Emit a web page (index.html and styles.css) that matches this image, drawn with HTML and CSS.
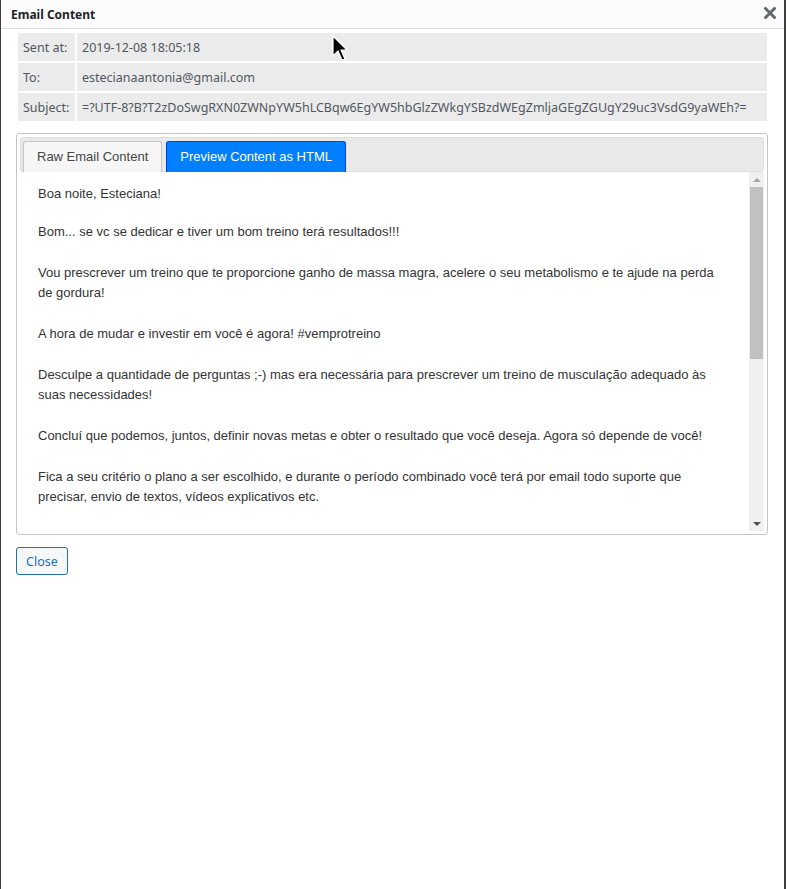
FILE: index.html
```html
<!DOCTYPE html>
<html lang="pt">
<head>
  <meta charset="UTF-8">
  <title>Email Content</title>
  <link rel="stylesheet" href="styles.css">
</head>
<body>
  <div class="modal">
    <div class="modal-header">
      <span class="modal-title">Email Content</span>
      <svg class="modal-close" width="12" height="12" viewBox="0 0 12 12">
        <path d="M1.5 1.5 L10.5 10.5 M10.5 1.5 L1.5 10.5" stroke="#646970" stroke-width="3" stroke-linecap="square"/>
      </svg>
    </div>

    <table class="email-meta">
      <tr>
        <th>Sent at:</th>
        <td>2019-12-08 18:05:18</td>
      </tr>
      <tr>
        <th>To:</th>
        <td>estecianaantonia@gmail.com</td>
      </tr>
      <tr>
        <th>Subject:</th>
        <td>=?UTF-8?B?T2zDoSwgRXN0ZWNpYW5hLCBqw6EgYW5hbGlzZWkgYSBzdWEgZmljaGEgZGUgY29uc3VsdG9yaWEh?=</td>
      </tr>
    </table>

    <div class="tabs">
      <ul class="tabs-nav">
        <li class="tab">Raw Email Content</li>
        <li class="tab active">Preview Content as HTML</li>
      </ul>
      <div class="tab-panel">
        <div class="panel-body">
          <p class="greeting">Boa noite, Esteciana!</p>
          <p>Bom... se vc se dedicar e tiver um bom treino terá resultados!!!</p>
          <p>Vou prescrever um treino que te proporcione ganho de massa magra, acelere o seu metabolismo e te ajude na perda de gordura!</p>
          <p>A hora de mudar e investir em você é agora! #vemprotreino</p>
          <p>Desculpe a quantidade de perguntas ;-) mas era necessária para prescrever um treino de musculação adequado às suas necessidades!</p>
          <p>Concluí que podemos, juntos, definir novas metas e obter o resultado que você deseja. Agora só depende de você!</p>
          <p>Fica a seu critério o plano a ser escolhido, e durante o período combinado você terá por email todo suporte que precisar, envio de textos, vídeos explicativos etc.</p>
          <p>Qualquer dúvida estou à disposição.</p>
          <p>Vamos juntos nessa!</p>
          <p>Abraços,</p>
          <p>Equipe #vemprotreino</p>
        </div>
        <div class="scrollbar">
          <div class="scroll-btn"><span class="arrow-up"></span></div>
          <div class="scroll-track">
            <div class="scroll-thumb"></div>
          </div>
          <div class="scroll-btn"><span class="arrow-down"></span></div>
        </div>
      </div>
    </div>

    <button class="btn-close">Close</button>

    <svg class="cursor" width="16" height="27" viewBox="0 0 16 27">
      <polygon points="1,1 1,21 6,16 10,25 13,24 9,15 15,15" fill="#000" stroke="#fff" stroke-width="1.2"/>
    </svg>
  </div>
</body>
</html>
```

FILE: styles.css
```css
html, body {
  margin: 0;
  padding: 0;
  background: #fff;
}
.modal {
  position: relative;
  box-sizing: border-box;
  width: 786px;
  height: 889px;
  border-left: 1px solid #3f3f3f;
  border-right: 2px solid #3f3f3f;
  background: #fff;
  font-family: "Noto Sans", "Open Sans", sans-serif;
}
.modal-header {
  display: flex;
  align-items: center;
  justify-content: space-between;
  height: 28px;
  padding: 0 8px 0 10px;
  background: #fcfcfc;
  border-bottom: 1px solid #dcdcde;
}
.modal-title {
  font-size: 12px;
  font-weight: bold;
  color: #1d2327;
}
.modal-close {
  margin-top: -2px;
}
.email-meta {
  table-layout: fixed;
  width: calc(100% - 30px);
  margin: 2px 15px 0 15px;
  border-spacing: 2px;
  font-size: 12.5px;
  color: #50575e;
}
.email-meta th, .email-meta td {
  background: #ebebeb;
  height: 28px;
  padding: 0 5px;
  text-align: left;
  font-weight: normal;
  white-space: nowrap;
  overflow: hidden;
}
.email-meta th {
  width: 47px;
}
.tabs {
  margin: 10px 16px 0 15px;
  padding: 3px;
  border: 1px solid #c5c5c5;
  border-radius: 3px;
  font-family: "Liberation Sans", Arial, sans-serif;
}
.tabs-nav {
  display: flex;
  gap: 4px;
  margin: 0;
  padding: 3px 2px 0;
  list-style: none;
  background: #e9e9e9;
  border: 1px solid #dddddd;
  border-radius: 3px;
}
.tab {
  margin-bottom: -1px;
  padding: 7px 13px;
  font-size: 13px;
  line-height: 16px;
  color: #454545;
  background: #f6f6f6;
  border: 1px solid #c5c5c5;
  border-bottom: none;
  border-radius: 3px 3px 0 0;
}
.tab.active {
  color: #fff;
  background: #007fff;
  border-color: #003eff;
}
.tab-panel {
  display: flex;
  height: 359px;
}
.panel-body {
  flex: 1;
  overflow: hidden;
  padding: 12px 24px 0 18px;
  font-size: 13px;
  line-height: 20px;
  color: #333;
}
.panel-body p {
  margin: 0 0 21px;
}
.panel-body .greeting {
  margin-bottom: 18px;
}
.scrollbar {
  display: flex;
  flex-direction: column;
  width: 15px;
  background: #f0f0f0;
}
.scroll-btn {
  display: flex;
  align-items: center;
  justify-content: center;
  height: 15px;
}
.arrow-up, .arrow-down {
  width: 0;
  height: 0;
  border-left: 4px solid transparent;
  border-right: 4px solid transparent;
}
.arrow-up {
  border-bottom: 4px solid #a3a3a3;
}
.arrow-down {
  border-top: 4px solid #505050;
}
.scroll-track {
  flex: 1;
}
.scroll-thumb {
  height: 172px;
  margin: 0 1px;
  background: #c1c1c1;
}
.btn-close {
  margin: 12px 0 0 15px;
  height: 28px;
  padding: 0 9px;
  font-family: "Noto Sans", "Open Sans", sans-serif;
  font-size: 12.5px;
  color: #2271b1;
  background: #f6f7f7;
  border: 1px solid #2271b1;
  border-radius: 3px;
}
.cursor {
  position: absolute;
  left: 331px;
  top: 35px;
}
```
